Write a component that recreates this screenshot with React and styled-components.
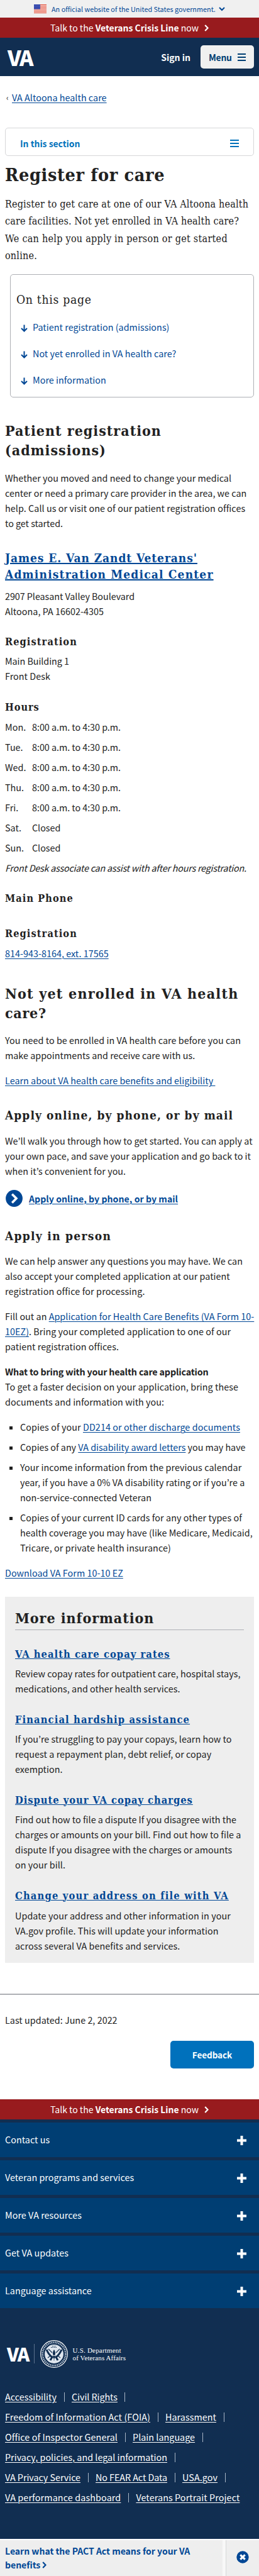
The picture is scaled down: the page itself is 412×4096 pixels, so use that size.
import React from "react";
import styled, { createGlobalStyle } from "styled-components";

const sans = '"Noto Sans CJK KR", "Noto Sans", sans-serif';
const slab = '"DejaVu Serif Condensed", "DejaVu Serif", serif';
const ink = "#212121";
const link = "#004795";
const navy = "#112e51";

const GlobalStyle = createGlobalStyle`
  *, *::before, *::after { box-sizing: border-box; }
  body {
    margin: 0;
    background: #fff;
    color: ${ink};
    font: 400 14.33px/24px ${sans};
    letter-spacing: 0.04px;
    text-underline-offset: 2px;
    text-decoration-thickness: 1px;
  }
`;

const Page = styled.div`
  width: 412px;
  height: 4096px;
  overflow: hidden;
  display: flex;
  flex-direction: column;
`;

const Line = styled.span`
  display: block;
  white-space: pre;
  letter-spacing: ${(p) => (p.$ls === undefined ? 0.04 : p.$ls)}px;
`;

const Link = styled.a`
  color: ${link};
  text-decoration: underline 1px;
  text-underline-offset: 2px;
`;

/* Banners and header */
const GovBanner = styled.div`
  height: 28px;
  flex: none;
  display: flex;
  align-items: center;
  padding-left: 54px;
  background: #f0f0f0;
  color: ${link};
  font-size: 10.8px;
  letter-spacing: 0.03px;
  white-space: nowrap;
  svg { flex: none; }
  span { margin: 0 5px 0 8px; width: 261px; }
`;

const CrisisBar = styled.div`
  height: 32px;
  flex: none;
  display: flex;
  align-items: center;
  justify-content: center;
  background: #981b1e;
  color: #fff;
  font-size: 14.1px;
  letter-spacing: 0;
  white-space: pre;
  b { font-size: 13.95px; }
  svg { margin: 1px 0 0 9px; }
`;

const Header = styled.header`
  height: 61px;
  flex: none;
  display: flex;
  align-items: center;
  padding: 0 8px 0 12px;
  background: ${navy};
`;

const Wordmark = styled.span`
  color: #fff;
  font: 900 ${(p) => p.$size}px/1 ${sans};
  letter-spacing: ${(p) => p.$ls}px;
`;

const SignIn = styled.span`
  margin-left: auto;
  color: #fff;
  font-weight: 700;
  font-size: 14px;
  letter-spacing: 0;
`;

const MenuButton = styled.button`
  width: 85px;
  height: 37px;
  margin-left: 16px;
  padding: 0 13px;
  display: flex;
  align-items: center;
  justify-content: space-between;
  border: 0;
  border-radius: 5px;
  background: #f0f0f0;
  color: #003e73;
  font: 700 13.9px/24px ${sans};
  letter-spacing: -0.25px;
`;

/* Main column */
const Main = styled.main`
  display: flex;
  flex-direction: column;
  padding: 22px 8px 0;
`;

const Breadcrumb = styled.nav`
  display: flex;
  padding-left: 2px;
  gap: 5px;
  span { width: 4px; font-size: 12px; }
`;

const SectionToggle = styled.div`
  height: 45px;
  margin-top: 36px;
  padding: 5px 23px 0;
  display: flex;
  align-items: center;
  justify-content: space-between;
  border: 1px solid #d6d7d9;
  border-radius: 5px;
  color: #0071bb;
  font-weight: 700;
  font-size: 13.9px;
  letter-spacing: 0;
`;

const H1 = styled.h1`
  margin: 11px 0 0;
  font: 700 28.5px/38px ${slab};
  letter-spacing: 0.66px;
  white-space: nowrap;
`;

const Intro = styled.p`
  margin: 14px 0 0;
  font: 400 16px/27.3px ${slab};
`;

const H2 = styled.h2`
  margin: ${(p) => p.$mt}px 0 0;
  font: 700 23px/31px ${slab};
`;

const H3 = styled.h3`
  margin: ${(p) => p.$mt}px 0 0;
  font: 700 19px/26px ${slab};
  a { text-decoration-thickness: 2px; text-underline-offset: 1px; }
`;

const H4 = styled.h4`
  margin: ${(p) => p.$mt || 26.5}px 0 0;
  font: 700 ${(p) => p.$size || 16.2}px/22px ${slab};
  a { text-underline-offset: 1px; }
`;

const Text = styled.p`
  margin: ${(p) => p.$mt}px 0 0;
  font-style: ${(p) => (p.$italic ? "italic" : "normal")};
`;

const Contents = styled.nav`
  height: 195.5px;
  margin: 16px 0 0 8px;
  padding: 24.5px 9px 0;
  border: 1px solid #aeb0b5;
  border-radius: 5px;
`;

const ContentsTitle = styled.div`
  font: 400 19.2px/30px ${slab};
  letter-spacing: 0.7px;
`;

const ContentsList = styled.div`
  margin: 16px 0 0 7px;
  display: flex;
  flex-direction: column;
  gap: 18px;
`;

const Jump = styled.a`
  display: flex;
  align-items: center;
  gap: 8px;
  color: ${link};
  svg { margin-top: 4px; }
`;

const Hours = styled.div`
  margin-top: 8px;
  display: grid;
  grid-template-columns: 43px 1fr;
  row-gap: 8px;
`;

const ActionLink = styled.a`
  height: 27px;
  margin-top: 18.7px;
  padding-left: 1px;
  display: flex;
  align-items: center;
  gap: 10px;
  color: ${link};
  font-weight: 700;
  font-size: 14.1px;
  text-decoration: underline 1px;
  text-underline-offset: 2px;
`;

const Bullets = styled.ul`
  margin: 16px 0 0;
  padding: 0;
  list-style: none;
  display: flex;
  flex-direction: column;
  gap: 8px;
`;

const Bullet = styled.li`
  display: flex;
  align-items: flex-start;
  gap: 12px;
  padding-left: 7px;
  &::before {
    content: "";
    flex: none;
    width: 5px;
    height: 5px;
    margin-top: 11px;
    background: ${ink};
  }
`;

const MoreInfo = styled.section`
  height: 582.5px;
  margin-top: 26px;
  padding: 17.7px 16px 0;
  background: #eee;
  h2 { border-bottom: 1px solid #aeb0b5; padding-bottom: 3px; }
`;

const Divider = styled.hr`
  width: 412px;
  flex: none;
  height: 2px;
  margin: 48.5px 0 0;
  border: 0;
  background: #aeb0b5;
`;

const Closing = styled.div`
  flex: none;
  display: flex;
  flex-direction: column;
  padding: 28px 8px 49px;
`;

const FeedbackButton = styled.button`
  align-self: flex-end;
  width: 133px;
  height: 44px;
  margin-top: 21px;
  border: 0;
  border-radius: 5px;
  background: #0071bc;
  color: #fff;
  font: 700 13.6px/24px ${sans};
  letter-spacing: -0.1px;
`;

/* Footer */
const Footer = styled.footer`
  flex: 1;
  background: ${navy};
`;

const Drawers = styled.div`
  display: flex;
  flex-direction: column;
  gap: 5px;
  padding-top: 5px;
`;

const Drawer = styled.div`
  height: 55px;
  padding: 0 20px 0 8px;
  display: flex;
  align-items: center;
  justify-content: space-between;
  background: #003e73;
  color: #fff;
  svg { margin-top: 2px; }
`;

const Brand = styled.div`
  height: 46px;
  margin-top: 50px;
  padding-left: 11px;
  display: flex;
  align-items: center;
`;

const BrandRule = styled.i`
  width: 1px;
  height: 31px;
  margin: 0 9px 0 8px;
  background: #5b718c;
`;

const BrandName = styled.div`
  margin-left: 8px;
  color: #fff;
  font: 400 11px/12px "Liberation Serif", serif;
  letter-spacing: 0;
  white-space: nowrap;
`;

const FooterLinks = styled.div`
  display: flex;
  flex-direction: column;
  gap: 8px;
  padding: 33px 8px 0;
`;

const LinkRow = styled.div`
  display: flex;
  align-items: center;
  white-space: nowrap;
  a { color: #fff; text-decoration: underline 1px; text-underline-offset: 2px; }
  i { width: 1px; height: 15px; margin: 2px 11.5px 0; background: #a9b6c6; }
`;

const Promo = styled.div`
  height: 59.5px;
  flex: none;
  display: flex;
  border-top: 2px solid #fff;
  background: #eee;
  color: ${link};
`;

const PromoText = styled.div`
  flex: 1;
  padding: 7.5px 0 0 8px;
  border-right: 5px solid #f8f8f8;
  font: 700 14px/21.7px ${sans};
`;

const PromoClose = styled.div`
  width: 53px;
  display: flex;
  align-items: center;
  justify-content: center;
  border-left: 1px solid #d6d7d9;
  svg { margin-bottom: 2px; }
`;

/* Icons */
const Flag = () => (
  <svg width="20" height="14" viewBox="0 0 20 14">
    <rect width="20" height="14" fill="#fff" />
    {[0, 1, 2, 3, 4, 5, 6].map((i) => (
      <rect key={i} y={i * 2.15} width="20" height="1.1" fill="#e0452f" />
    ))}
    <rect width="10" height="7.6" fill="#2b3fa8" />
    {[1.5, 3.8, 6.1, 8.4].map((x) =>
      [1.7, 3.8, 5.9].map((y) => <circle key={`${x}-${y}`} cx={x} cy={y} r=".45" fill="#cdd6ff" />)
    )}
  </svg>
);
const Chevron = ({ w, h, d, sw = 2.2 }) => (
  <svg width={w} height={h} viewBox={`0 0 ${w} ${h}`} fill="none" stroke="currentColor" strokeWidth={sw}>
    <path d={d} />
  </svg>
);
const Burger = ({ w, h, sw }) => (
  <svg width={w} height={h} fill="currentColor">
    <rect width={w} height={sw} />
    <rect y={(h - sw) / 2} width={w} height={sw} />
    <rect y={h - sw} width={w} height={sw} />
  </svg>
);
const Down = () => (
  <svg width="11" height="12" viewBox="0 0 11 12" fill="none" stroke="currentColor" strokeWidth="2">
    <path d="M5.5 .5v10M1 6l4.500 4.500L10 6" />
  </svg>
);
const Plus = () => (
  <svg width="15" height="15" viewBox="0 0 15 15" fill="#fff">
    <path d="M5.500 0h4v5.500H15v4H9.500V15h-4V9.500H0v-4h5.500z" />
  </svg>
);
const CircleGo = () => (
  <svg width="27" height="27" viewBox="0 0 27 27">
    <circle cx="13.500" cy="13.500" r="13.400" fill={link} />
    <path d="M10.200 6.800l6.800 6.800-6.800 6.800" fill="none" stroke="#fff" strokeWidth="3.600" />
  </svg>
);
const CircleClose = () => (
  <svg width="20" height="20" viewBox="0 0 20 20">
    <circle cx="10" cy="10" r="9.700" fill={link} />
    <path d="M6.300 6.300l7.400 7.400M13.700 6.300l-7.400 7.400" stroke="#fff" strokeWidth="3.200" />
  </svg>
);
const Seal = () => (
  <svg width="44" height="44" viewBox="0 0 44 44" fill="none">
    <circle cx="22" cy="22" r="21.300" stroke="#fff" strokeWidth="1.200" />
    <circle cx="22" cy="22" r="18.300" stroke="#c3cedb" strokeWidth="2.600" strokeDasharray="1.500 1.300" />
    <circle cx="22" cy="22" r="14.900" fill="#dfe6ee" />
    <path d="M10 15c3 7 6 10 9 12l-3 5M34 15c-3 7-6 10-9 12l3 5" stroke={navy} strokeWidth="3" />
    <path d="M22 15c2.500 3 3 9 0 18-3-9-2.500-15 0-18z" fill={navy} />
    <path d="M17 11.500h10M19 9.500h6" stroke={navy} strokeWidth="1" strokeDasharray="1.500 1" />
    <path d="M13 14l6 6M31 14l-6 6M12 28l4-3M32 28l-4-3" stroke={navy} strokeWidth="1.200" />
    <path d="M18.500 22l3.500 3 3.500-3M19 30h6" stroke="#fff" strokeWidth="1" />
  </svg>
);

const Crisis = () => (
  <CrisisBar>
    <span>Talk to the <b>Veterans Crisis Line</b> now</span>
    <Chevron w={7} h={11} d="M1.2 1l4.300 4.500L1.200 10" />
  </CrisisBar>
);

const hours = [
  ["Mon.", "8:00 a.m. to 4:30 p.m."],
  ["Tue.", "8:00 a.m. to 4:30 p.m."],
  ["Wed.", "8:00 a.m. to 4:30 p.m."],
  ["Thu.", "8:00 a.m. to 4:30 p.m."],
  ["Fri.", "8:00 a.m. to 4:30 p.m."],
  ["Sat.", "Closed"],
  ["Sun.", "Closed"],
];

const drawers = ["Contact us", "Veteran programs and services", "More VA resources", "Get VA updates", "Language assistance"];

const footerLinks = [
  [["Accessibility", 0.03], ["Civil Rights", -0.05]],
  [["Freedom of Information Act (FOIA)", 0.1], ["Harassment", 0.05]],
  [["Office of Inspector General", 0.09], ["Plain language", 0.03]],
  [["Privacy, policies, and legal information", 0.02]],
  [["VA Privacy Service", -0.03], ["No FEAR Act Data", -0.06], ["USA.gov", 0.1]],
  [["VA performance dashboard", 0.13], ["Veterans Portrait Project", 0.1]],
];

export default function App() {
  return (
    <Page>
      <GlobalStyle />
      <GovBanner>
        <Flag />
        <span>An official website of the United States government.</span>
        <Chevron w={10} h={7} d="M1 1l4 4 4-4" sw={2} />
      </GovBanner>
      <Crisis />
      <Header>
        <Wordmark $size={34} $ls={-2.2}>VA</Wordmark>
        <SignIn>Sign in</SignIn>
        <MenuButton>Menu<Burger w={13} h={12} sw={2} /></MenuButton>
      </Header>

      <Main>
        <Breadcrumb>
          <span>‹</span>
          <Link>VA Altoona health care</Link>
        </Breadcrumb>
        <SectionToggle>In this section<Burger w={14} h={12} sw={2} /></SectionToggle>

        <H1>Register for care</H1>
        <Intro>
          <Line $ls={0.16}>Register to get care at one of our VA Altoona health</Line>
          <Line $ls={0.15}>care facilities. Not yet enrolled in VA health care?</Line>
          <Line $ls={0.27}>We can help you apply in person or get started</Line>
          <Line $ls={0.2}>online.</Line>
        </Intro>

        <Contents>
          <ContentsTitle>On this page</ContentsTitle>
          <ContentsList>
            <Jump><Down />Patient registration (admissions)</Jump>
            <Jump><Down />Not yet enrolled in VA health care?</Jump>
            <Jump><Down />More information</Jump>
          </ContentsList>
        </Contents>

        <H2 $mt={37.5}>
          <Line $ls={1}>Patient registration</Line>
          <Line $ls={1}>(admissions)</Line>
        </H2>
        <Text $mt={16.5}>
          <Line $ls={0.03}>Whether you moved and need to change your medical</Line>
          <Line $ls={0.02}>center or need a primary care provider in the area, we can</Line>
          <Line $ls={0.07}>help. Call us or visit one of our patient registration offices</Line>
          <Line $ls={-0.03}>to get started.</Line>
        </Text>

        <H3 $mt={30.5}>
          <Link>
            <Line $ls={0.93}>James E. Van Zandt Veterans'</Line>
            <Line $ls={1.18}>Administration Medical Center</Line>
          </Link>
        </H3>
        <Text $mt={9.5}>
          <Line $ls={-0.04}>2907 Pleasant Valley Boulevard</Line>
          <Line>Altoona, PA 16602-4305</Line>
        </Text>

        <H4><Line $ls={1.1}>Registration</Line></H4>
        <Text $mt={7.3}>
          <Line $ls={-0.04}>Main Building 1</Line>
          <Line>Front Desk</Line>
        </Text>

        <H4><Line $ls={0.95}>Hours</Line></H4>
        <Hours>
          {hours.map(([day, time]) => (
            <React.Fragment key={day}>
              <span>{day}</span>
              <Line $ls={-0.03}>{time}</Line>
            </React.Fragment>
          ))}
        </Hours>
        <Text $mt={8} $italic>
          <Line $ls={-0.22}>Front Desk associate can assist with after hours registration.</Line>
        </Text>

        <H4 $mt={26}><Line $ls={1.1}>Main Phone</Line></H4>
        <H4 $mt={34}><Line $ls={1.1}>Registration</Line></H4>
        <Text $mt={7.8}><Link>814-943-8164, ext. 17565</Link></Text>

        <H2 $mt={36.7}>
          <Line $ls={1.2}>Not yet enrolled in VA health</Line>
          <Line $ls={0.7}>care?</Line>
        </H2>
        <Text $mt={15.3}>
          <Line $ls={0.05}>You need to be enrolled in VA health care before you can</Line>
          <Line $ls={0.02}>make appointments and receive care with us.</Line>
        </Text>
        <Text $mt={16}><Line><Link>Learn about VA health care benefits and eligibility </Link></Line></Text>

        <H3 $mt={30.4}><Line $ls={1.07}>Apply online, by phone, or by mail</Line></H3>
        <Text $mt={15.6}>
          <Line>We’ll walk you through how to get started. You can apply at</Line>
          <Line $ls={0.03}>your own pace, and save your application and go back to it</Line>
          <Line>when it’s convenient for you.</Line>
        </Text>
        <ActionLink><CircleGo />Apply online, by phone, or by mail</ActionLink>

        <H3 $mt={32.7}><Line $ls={1.3}>Apply in person</Line></H3>
        <Text $mt={15.3}>
          <Line $ls={-0.01}>We can help answer any questions you may have. We can</Line>
          <Line>also accept your completed application at our patient</Line>
          <Line $ls={0.13}>registration office for processing.</Line>
        </Text>
        <Text $mt={16}>
          <Line>Fill out an <Link>Application for Health Care Benefits (VA Form 10-</Link></Line>
          <Line $ls={0.05}><Link>10EZ)</Link>. Bring your completed application to one of our</Line>
          <Line $ls={0.08}>patient registration offices.</Line>
        </Text>
        <Text $mt={16}>
          <Line as="b" $ls={-0.17}>What to bring with your health care application</Line>
          <Line $ls={0.07}>To get a faster decision on your application, bring these</Line>
          <Line>documents and information with you:</Line>
        </Text>
        <Bullets>
          <Bullet><Line $ls={0.09}>Copies of your <Link>DD214 or other discharge documents</Link></Line></Bullet>
          <Bullet><Line $ls={-0.02}>Copies of any <Link>VA disability award letters</Link> you may have</Line></Bullet>
          <Bullet>
            <div>
              <Line $ls={0.08}>Your income information from the previous calendar</Line>
              <Line>year, if you have a 0% VA disability rating or if you’re a</Line>
              <Line $ls={0.05}>non-service-connected Veteran</Line>
            </div>
          </Bullet>
          <Bullet>
            <div>
              <Line $ls={0.07}>Copies of your current ID cards for any other types of</Line>
              <Line $ls={0.02}>health coverage you may have (like Medicare, Medicaid,</Line>
              <Line $ls={0.11}>Tricare, or private health insurance)</Line>
            </div>
          </Bullet>
        </Bullets>
        <Text $mt={15.5}><Link>Download VA Form 10-10 EZ</Link></Text>

        <MoreInfo>
          <H2 $mt={0}><Line $ls={0.95}>More information</Line></H2>
          <H4 $mt={28} $size={16.4}><Link><Line $ls={1.03}>VA health care copay rates</Line></Link></H4>
          <Text $mt={7.5}>
            <Line $ls={0.03}>Review copay rates for outpatient care, hospital stays,</Line>
            <Line $ls={0.03}>medications, and other health services.</Line>
          </Text>
          <H4 $size={16.4}><Link><Line $ls={1.11}>Financial hardship assistance</Line></Link></H4>
          <Text $mt={7.5}>
            <Line>If you’re struggling to pay your copays, learn how to</Line>
            <Line $ls={0.05}>request a repayment plan, debt relief, or copay</Line>
            <Line $ls={0.02}>exemption.</Line>
          </Text>
          <H4 $size={16.4}><Link><Line $ls={0.95}>Dispute your VA copay charges</Line></Link></H4>
          <Text $mt={7.5}>
            <Line $ls={0.01}>Find out how to file a dispute If you disagree with the</Line>
            <Line>charges or amounts on your bill. Find out how to file a</Line>
            <Line $ls={0.03}>dispute If you disagree with the charges or amounts</Line>
            <Line $ls={0.07}>on your bill.</Line>
          </Text>
          <H4 $size={16.4}><Link><Line $ls={1.17}>Change your address on file with VA</Line></Link></H4>
          <Text $mt={8}>
            <Line $ls={0.09}>Update your address and other information in your</Line>
            <Line $ls={0.07}>VA.gov profile. This will update your information</Line>
            <Line $ls={0.05}>across several VA benefits and services.</Line>
          </Text>
        </MoreInfo>
      </Main>

      <Divider />
      <Closing>
        <span>Last updated: June 2, 2022</span>
        <FeedbackButton>Feedback</FeedbackButton>
      </Closing>

      <Crisis />
      <Footer>
        <Drawers>
          {drawers.map((label) => (
            <Drawer key={label}><span>{label}</span><Plus /></Drawer>
          ))}
        </Drawers>
        <Brand>
          <Wordmark $size={29.5} $ls={-1.6}>VA</Wordmark>
          <BrandRule />
          <Seal />
          <BrandName>
            <Line $ls={0.2}>U.S. Department</Line>
            <Line $ls={0.1}>of Veterans Affairs</Line>
          </BrandName>
        </Brand>
        <FooterLinks>
          {footerLinks.map((row, r) => (
            <LinkRow key={r}>
              {row.map(([label, ls], i) => (
                <React.Fragment key={label}>
                  <Line as="a" $ls={ls}>{label}</Line>
                  {(r < footerLinks.length - 1 || i < row.length - 1) && <i />}
                </React.Fragment>
              ))}
            </LinkRow>
          ))}
        </FooterLinks>
      </Footer>
      <Promo>
        <PromoText>
          <Line $ls={0}>Learn what the PACT Act means for your VA</Line>
          <Line $ls={0}>benefits <Chevron w={7} h={11} d="M1.200 1l4.300 4.500L1.200 10" /></Line>
        </PromoText>
        <PromoClose><CircleClose /></PromoClose>
      </Promo>
    </Page>
  );
}
